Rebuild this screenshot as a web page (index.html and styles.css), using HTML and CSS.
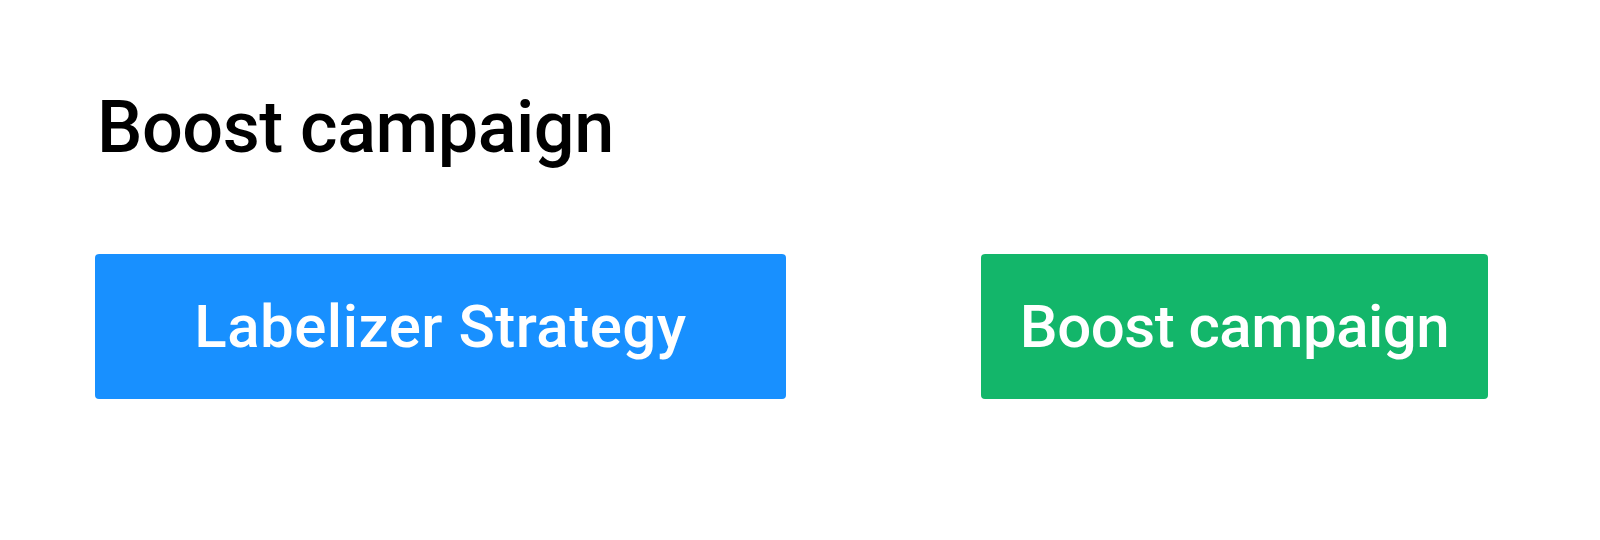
FILE: index.html
```html
<!DOCTYPE html>
<html lang="en">
<head>
    <meta charset="UTF-8">
    <meta name="viewport" content="width=device-width, initial-scale=1.0">
    <title>Boost campaign</title>
    <link rel="stylesheet" href="styles.css">
</head>
<body>
    <div id="campaign">
        <!-- Page title -->
        <h1 class="title">Boost campaign</h1>

        <!-- Two action buttons side by side -->
        <div class="actions">
            <button class="btn btn-blue">Labelizer Strategy</button>
            <button class="btn btn-green">Boost campaign</button>
        </div>
    </div>
</body>
</html>
```

FILE: styles.css
```css
/* General Reset */
body {
    margin: 0;
    padding: 0;
    background-color: #fff;
    color: #000;
    font-family: Roboto, "Liberation Sans", sans-serif;
}

#campaign {
    padding: 92px 0 0 95px;
}

.title {
    margin: 0 0 90px 2px;
    font-size: 72px;
    font-weight: 500;
    line-height: 1;
    letter-spacing: -0.5px;
}

/* Buttons row */
.actions {
    display: flex;
    gap: 195px;
}

.btn {
    height: 145px;
    border: none;
    border-radius: 4px;
    color: #fff;
    font-family: Roboto, "Liberation Sans", sans-serif;
    font-size: 60px;
    font-weight: 500;
    cursor: pointer;
}

.btn-blue {
    width: 691px;
    background-color: #1890ff;
    letter-spacing: 0.5px;
}

.btn-green {
    width: 507px;
    background-color: #13b66a;
    letter-spacing: -0.5px;
}
```
